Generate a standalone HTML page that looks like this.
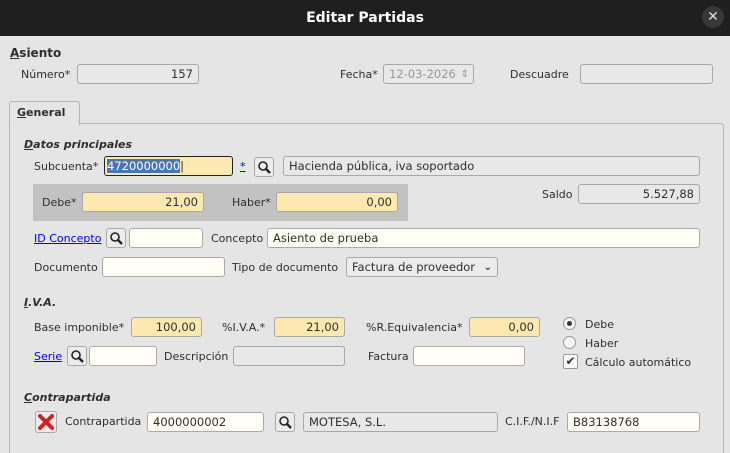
<!DOCTYPE html>
<html><head><meta charset="utf-8"><style>
*{box-sizing:border-box;margin:0;padding:0}
html,body{width:730px;height:453px;overflow:hidden}
body{background:#e5e5e5;font-family:"DejaVu Sans","Liberation Sans",sans-serif;font-size:11px;color:#2e2e2e;position:relative}
.tb{position:absolute;left:0;top:0;width:730px;height:36px;background:#1f1f1f;color:#fff;font-weight:bold;font-size:14px;text-align:center;line-height:36px}
.cl{position:absolute;left:702px;top:6px;width:22px;height:22px;border-radius:50%;background:#383838;color:#ddd;font-size:14px;line-height:22px;text-align:center;font-weight:normal}
.a{position:absolute;white-space:nowrap;line-height:14px;margin-top:1px}
.i{position:absolute;height:20px;border:1px solid #a9a9a9;border-radius:3px;background:#e8e8e8;line-height:19px;padding:0 5px;white-space:nowrap;overflow:hidden;font-size:11.5px}
.w{background:#fffff7}
.y{background:#fde9b0;text-align:right}
.r{text-align:right}
.h{font-weight:bold;font-style:italic}
.lk{color:#0000ee;text-decoration:underline}
.s{position:absolute;width:20px;height:20px;border:1px solid #a9a9a9;border-radius:3px;background:#ececec}
.s svg{position:absolute;left:2px;top:2px}
.u{text-decoration:underline}
</style></head><body>
<div class="tb">Editar Partidas<div class="cl">✕</div></div>
<div class="a" style="left:10px;top:45px;font-weight:bold;font-size:12px"><span class="u">A</span>siento</div>
<div class="a" style="left:21px;top:67px">Número*</div>
<div class="i r" style="left:77px;top:64px;width:122px">157</div>
<div class="a" style="left:340px;top:67px">Fecha*</div>
<div class="i" style="left:383px;top:64px;width:91px;color:#999">12-03-2026 <span style="position:absolute;right:4px;top:0;font-size:10px">⇕</span></div>
<div class="a" style="left:510px;top:67px">Descuadre</div>
<div class="i" style="left:580px;top:64px;width:133px"></div>
<div style="position:absolute;left:9px;top:123px;width:715px;height:340px;border:1px solid #b5b5b5;border-radius:3px"></div>
<div style="position:absolute;left:9px;top:101px;width:71px;height:24px;border:1px solid #b5b5b5;border-bottom:none;border-radius:3px 3px 0 0;background:#e5e5e5"></div>
<div class="a" style="left:17px;top:105px;font-weight:bold"><span class="u">G</span>eneral</div>
<div class="a h" style="left:24px;top:137px"><span class="u">D</span>atos principales</div>
<div class="a" style="left:34px;top:159px">Subcuenta*</div>
<div class="i" style="left:104px;top:156px;width:129px;background:#fde9b0;border:1px solid #222;padding-left:2px;line-height:18px"><span style="background:#4a76b8;color:#fff">4720000000</span>|</div>
<div class="a lk" style="left:240px;top:159px">*</div>
<div class="s" style="left:254px;top:157px"><svg width="15" height="15" viewBox="0 0 15 15"><circle cx="6" cy="6" r="4" fill="none" stroke="#222" stroke-width="1.6"/><path d="M9 9L13 13" stroke="#222" stroke-width="2.4"/></svg></div>
<div class="i" style="left:283px;top:156px;width:417px">Hacienda pública, iva soportado</div>
<div style="position:absolute;left:33px;top:184px;width:375px;height:37px;background:#c2c2c2"></div>
<div class="a" style="left:42px;top:195px">Debe*</div>
<div class="i y" style="left:82px;top:192px;width:122px">21,00</div>
<div class="a" style="left:232px;top:195px">Haber*</div>
<div class="i y" style="left:276px;top:192px;width:122px">0,00</div>
<div class="a" style="left:542px;top:187px">Saldo</div>
<div class="i r" style="left:578px;top:184px;width:122px">5.527,88</div>
<div class="a lk" style="left:34px;top:231px">ID Concepto</div>
<div class="s" style="left:106px;top:228px"><svg width="15" height="15" viewBox="0 0 15 15"><circle cx="6" cy="6" r="4" fill="none" stroke="#222" stroke-width="1.6"/><path d="M9 9L13 13" stroke="#222" stroke-width="2.4"/></svg></div>
<div class="i w" style="left:129px;top:228px;width:74px"></div>
<div class="a" style="left:211px;top:231px">Concepto</div>
<div class="i w" style="left:267px;top:228px;width:433px">Asiento de prueba</div>
<div class="a" style="left:34px;top:260px">Documento</div>
<div class="i w" style="left:102px;top:257px;width:123px"></div>
<div class="a" style="left:232px;top:260px">Tipo de documento</div>
<div class="i" style="left:346px;top:257px;width:152px;background:#ececec">Factura de proveedor<span style="position:absolute;right:5px;top:0;font-size:10px;font-weight:bold">⌄</span></div>
<div class="a h" style="left:24px;top:295px"><span class="u">I</span>.V.A.</div>
<div class="a" style="left:34px;top:320px">Base imponible*</div>
<div class="i y" style="left:131px;top:317px;width:71px">100,00</div>
<div class="a" style="left:222px;top:320px">%I.V.A.*</div>
<div class="i y" style="left:274px;top:317px;width:71px">21,00</div>
<div class="a" style="left:366px;top:320px">%R.Equivalencia*</div>
<div class="i y" style="left:469px;top:317px;width:71px">0,00</div>
<div style="position:absolute;left:563px;top:317px;width:13px;height:13px;border:1px solid #999;border-radius:50%;background:#f4f4f4"><div style="position:absolute;left:3px;top:3px;width:5px;height:5px;border-radius:50%;background:#333"></div></div>
<div class="a" style="left:585px;top:317px">Debe</div>
<div style="position:absolute;left:563px;top:336px;width:13px;height:13px;border:1px solid #999;border-radius:50%;background:#f4f4f4"></div>
<div class="a" style="left:585px;top:336px">Haber</div>
<div style="position:absolute;left:563px;top:354px;width:15px;height:15px;border:1px solid #999;border-radius:2px;background:#fafafa;font-size:12px;line-height:13px;text-align:center">✔</div>
<div class="a" style="left:585px;top:355px">Cálculo automático</div>
<div class="a lk" style="left:34px;top:349px">Serie</div>
<div class="s" style="left:67px;top:346px"><svg width="15" height="15" viewBox="0 0 15 15"><circle cx="6" cy="6" r="4" fill="none" stroke="#222" stroke-width="1.6"/><path d="M9 9L13 13" stroke="#222" stroke-width="2.4"/></svg></div>
<div class="i w" style="left:89px;top:346px;width:68px"></div>
<div class="a" style="left:164px;top:349px">Descripción</div>
<div class="i" style="left:233px;top:346px;width:112px"></div>
<div class="a" style="left:368px;top:349px">Factura</div>
<div class="i w" style="left:413px;top:346px;width:112px"></div>
<div class="a h" style="left:24px;top:390px"><span class="u">C</span>ontrapartida</div>
<div class="s" style="left:35px;top:411px;width:22px;height:22px"><svg width="18" height="18" viewBox="0 0 18 18" style="left:1px;top:1px"><path d="M3 3L15 15M15 3L3 15" stroke="#d42020" stroke-width="4" stroke-linecap="round"/></svg></div>
<div class="a" style="left:65px;top:414px">Contrapartida</div>
<div class="i w" style="left:147px;top:412px;width:117px">4000000002</div>
<div class="s" style="left:275px;top:412px"><svg width="15" height="15" viewBox="0 0 15 15"><circle cx="6" cy="6" r="4" fill="none" stroke="#222" stroke-width="1.6"/><path d="M9 9L13 13" stroke="#222" stroke-width="2.4"/></svg></div>
<div class="i" style="left:303px;top:412px;width:195px">MOTESA, S.L.</div>
<div class="a" style="left:505px;top:414px">C.I.F./N.I.F</div>
<div class="i w" style="left:567px;top:412px;width:133px">B83138768</div>
</body></html>
